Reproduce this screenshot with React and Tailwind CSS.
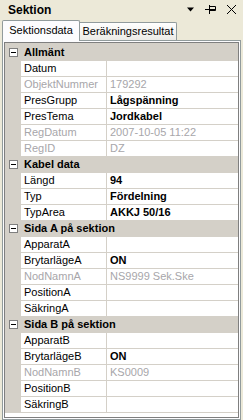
import React from "react";

const font = { fontFamily: '"Liberation Sans", Arial, sans-serif' };

function Minus() {
  return (
    <div className="w-[9px] h-[9px] border border-[#7f7f7f] bg-white flex items-center justify-center">
      <div className="w-[5px] h-[1px] bg-black" />
    </div>
  );
}

function Category({ title }) {
  return (
    <div className="flex items-center h-[16px] bg-[#d4d0c8] border-b border-[#d4d0c8]">
      <div className="w-[16px] flex justify-center pl-[1px]">
        <Minus />
      </div>
      <div className="pl-[3px] font-bold text-[11px] text-black leading-none">{title}</div>
    </div>
  );
}

function Row({ name, value, disabled, bold }) {
  const c = disabled ? "text-[#a7a6aa]" : "text-black";
  return (
    <div className="grid grid-cols-[16px_86px_1fr] h-[16px]">
      <div className="bg-[#d4d0c8]" />
      <div className={`bg-white border-r border-b border-[#d4d0c8] pl-[3px] flex items-center text-[11px] leading-none ${c}`}>
        {name}
      </div>
      <div
        className={`bg-white border-b border-[#d4d0c8] pl-[3px] flex items-center text-[11px] leading-none ${c} ${
          bold && !disabled ? "font-bold" : ""
        }`}
      >
        {value}
      </div>
    </div>
  );
}

export default function App() {
  return (
    <div className="w-[243px] h-[420px] bg-[#ece9d8] overflow-hidden flex flex-col" style={font}>
      <div className="h-[19px] flex items-center justify-between pl-[8px] pr-[6px] shrink-0">
        <span className="text-[12px] font-bold text-black leading-none">Sektion</span>
        <div className="flex items-center gap-[7px]">
          <svg width="9" height="5" viewBox="0 0 9 5">
            <path d="M1 0.5 L8 0.5 L4.5 4.5 Z" fill="#000" />
          </svg>
          <svg width="11" height="11" viewBox="0 0 11 11" className="ml-[3px]">
            <path d="M0 5.5 H4 M4.5 1 V10 M4.5 2.5 H10.5 V6.5 H4.5 M4.5 5.5 H10.5" stroke="#000" strokeWidth="1" fill="none" />
          </svg>
          <svg width="11" height="11" viewBox="0 0 11 11" className="ml-[3px]">
            <path d="M1 1 L10 10 M10 1 L1 10" stroke="#000" strokeWidth="1" fill="none" />
          </svg>
        </div>
      </div>
      <div className="h-[21px] flex items-end pl-[2px] shrink-0 relative">
        <div className="h-[21px] w-[78px] bg-[#fcfcfe] border border-b-0 border-[#919b9c] rounded-t-[2px] flex items-center justify-center text-[11px] text-black leading-none relative z-10 -mb-[1px] pb-[1px]">
          Sektionsdata
        </div>
        <div className="h-[18px] w-[97px] bg-gradient-to-b from-[#ffffff] to-[#ecebe6] border border-b-0 border-l-0 border-[#919b9c] rounded-tr-[2px] flex items-center justify-center text-[11px] text-[#000] leading-none">
          Beräkningsresultat
        </div>
      </div>
      <div className="ml-[2px] w-[239px] flex-1 border border-[#919b9c] bg-[#fcfcfe] p-[1px] flex flex-col min-h-0">
        <div className="flex-1 border border-[#7f7f7f] bg-white flex flex-col min-h-0 overflow-hidden">
          <div className="h-[2px] bg-[#d4d0c8]" />
          <Category title="Allmänt" />
          <Row name="Datum" value="" />
          <Row name="ObjektNummer" value="179292" disabled />
          <Row name="PresGrupp" value="Lågspänning" bold />
          <Row name="PresTema" value="Jordkabel" bold />
          <Row name="RegDatum" value="2007-10-05 11:22" disabled />
          <Row name="RegID" value="DZ" disabled />
          <Category title="Kabel data" />
          <Row name="Längd" value="94" bold />
          <Row name="Typ" value="Fördelning" bold />
          <Row name="TypArea" value="AKKJ 50/16" bold />
          <Category title="Sida A på sektion" />
          <Row name="ApparatA" value="" />
          <Row name="BrytarlägeA" value="ON" bold />
          <Row name="NodNamnA" value="NS9999 Sek.Ske" disabled />
          <Row name="PositionA" value="" />
          <Row name="SäkringA" value="" />
          <Category title="Sida B på sektion" />
          <Row name="ApparatB" value="" />
          <Row name="BrytarlägeB" value="ON" bold />
          <Row name="NodNamnB" value="KS0009" disabled />
          <Row name="PositionB" value="" />
          <Row name="SäkringB" value="" />
        </div>
      </div>
    </div>
  );
}
